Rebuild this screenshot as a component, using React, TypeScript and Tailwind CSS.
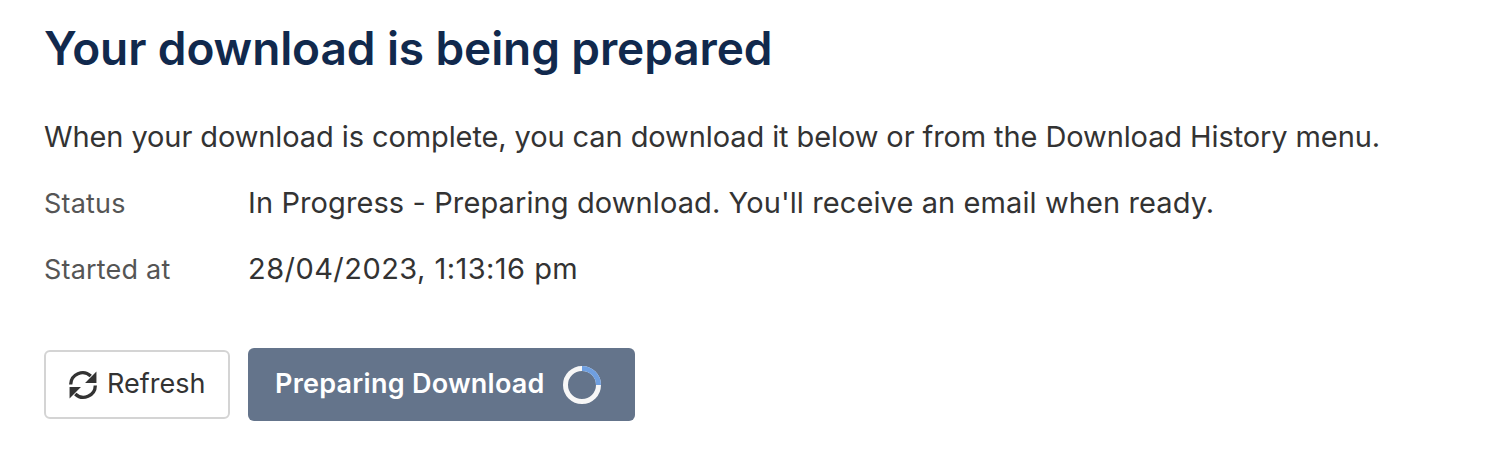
import React from "react";

function SyncIcon() {
  return (
    <svg width="30" height="30" viewBox="0 0 29 29" fill="none">
      <path d="M2.6 14A11.5 11.5 0 0 1 22 5.8" stroke="#333333" strokeWidth="3.2" />
      <path d="M27.5 1.5V12.5H16.5Z" fill="#333333" />
      <g transform="rotate(180 14.5 14.5)">
        <path d="M2.6 14A11.5 11.5 0 0 1 22 5.8" stroke="#333333" strokeWidth="3.2" />
        <path d="M27.5 1.5V12.5H16.5Z" fill="#333333" />
      </g>
    </svg>
  );
}

export default function App() {
  return (
    <div className="w-[1500px] h-[458px] bg-white pl-[44px] pt-[20px] font-['Inter',sans-serif] text-[#333333] overflow-hidden">
      <h1 className="text-[46px] leading-[56px] font-semibold text-[#11294d] tracking-[-0.1px] whitespace-nowrap">Your download is being prepared</h1>
      <p className="mt-[41px] text-[29px] leading-[40px] tracking-[-0.1px] whitespace-nowrap">When your download is complete, you can download it below or from the Download History menu.</p>
      <div className="mt-[16px] flex items-center h-[60px]">
        <span className="w-[204px] pt-[2px] text-[27px] text-[#555555] tracking-[0.2px]">Status</span>
        <span className="text-[29px] tracking-[0.1px]">In Progress - Preparing download. You'll receive an email when ready.</span>
      </div>
      <div className="mt-[6px] flex items-center h-[60px]">
        <span className="w-[204px] pt-[2px] text-[27px] text-[#555555] tracking-[0.2px]">Started at</span>
        <span className="text-[29px] tracking-[0.45px]">28/04/2023, 1:13:16 pm</span>
      </div>
      <div className="mt-[49px] flex items-center gap-[18px]">
        <button className="w-[186px] h-[69px] flex items-center pl-[22px] gap-[9px] border-2 border-[#d4d4d4] rounded-[6px] text-[27px] bg-white">
          <SyncIcon />
          Refresh
        </button>
        <button className="w-[387px] h-[73px] flex items-center pl-[27px] gap-[18px] rounded-[6px] bg-[#64748b] text-white text-[27px] font-semibold tracking-[0.25px]">
          Preparing Download
          <svg width="38" height="38" viewBox="0 0 38 38" fill="none"><circle cx="19" cy="19" r="16.5" stroke="#f7f7f7" strokeWidth="5" /><path d="M19 2.5A16.5 16.5 0 0 1 35.5 19" stroke="#6f9fe0" strokeWidth="5" /></svg>
        </button>
      </div>
    </div>
  );
}
